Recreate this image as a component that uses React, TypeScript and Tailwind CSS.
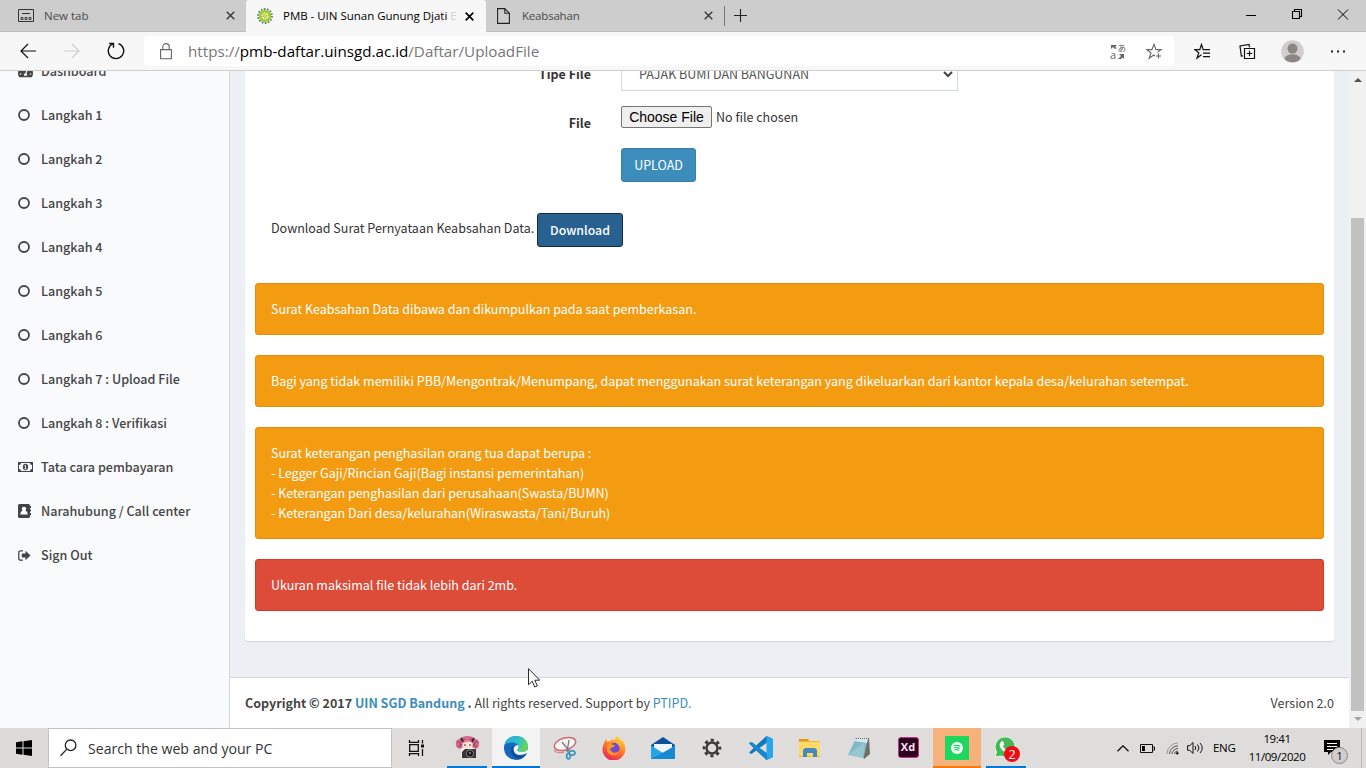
import React from "react";
import { FaTachometerAlt } from "react-icons/fa";

const UI = "font-['Open_Sans','Noto_Sans',sans-serif]";
const BODY = "font-['Noto_Sans_CJK_SC','Noto_Sans',sans-serif]";

function Close({ dark }: { dark?: boolean }) {
  return (
    <svg width="9" height="9" viewBox="0 0 9 9" className="shrink-0">
      <path d="M.7.7 8.3 8.3M8.3.7.7 8.3" stroke={dark ? "#000" : "#333"} strokeWidth={dark ? 1.7 : 1.3} />
    </svg>
  );
}

function TabStrip() {
  return (
    <div className={`flex h-8 items-stretch bg-[#cdcdcd] ${UI} text-[11.5px] text-[#4a4a4a]`}>
      <div className="flex w-[246px] items-center border-b border-[#bdbdbd] pl-[18px] pr-[11px]">
        <svg width="16" height="13" viewBox="0 0 16 13" fill="none" stroke="#333">
          <path d="M.5.5h15v12H.5zM4 4.5h8" />
          <path d="M3 8.5h2v2H3zM7 8.5h2v2H7zM11 8.5h2v2h-2z" strokeWidth=".9" />
        </svg>
        <span className="ml-[10px] flex-1">New tab</span>
        <Close />
      </div>
      <div className="flex w-[240px] items-center rounded-t-[3px] bg-[#f7f7f7] pl-[11px] pr-[12px] text-black">
        <svg width="16" height="16" viewBox="0 0 16 16" className="shrink-0">
          <circle cx="8" cy="8" r="7" fill="none" stroke="#4d7f70" strokeWidth="1.8" strokeDasharray="1.7 1.45" />
          <circle cx="8" cy="8" r="6.2" fill="#a5c935" />
          <circle cx="8" cy="8" r="2.7" fill="none" stroke="#fbfbdc" strokeWidth="1.7" strokeDasharray="1.8 .9" />
          <circle cx="8" cy="8" r="1" fill="#e2df67" />
        </svg>
        <span className="ml-[10px] whitespace-nowrap tracking-[-0.02px]">
          PMB - UIN Sunan Gunung Djati <span className="text-[#cfcfcf]">E</span>
        </span>
        <span className="flex-1" />
        <Close dark />
      </div>
      <div className="flex w-[239px] items-center border-b border-[#bdbdbd] pl-[11px] pr-[12px]">
        <svg width="13" height="16" viewBox="0 0 13 16" fill="none" stroke="#222" strokeWidth="1.1">
          <path d="M.6.6h7.2l4.6 4.6v10.2H.6zM7.8.6v4.6h4.6" />
        </svg>
        <span className="ml-3 flex-1 tracking-[-0.2px]">Keabsahan</span>
        <Close />
      </div>
      <div className="flex flex-1 items-center border-b border-[#bdbdbd]">
        <div className="-ml-px h-5 w-px bg-[#777]" />
        <svg width="13" height="13" viewBox="0 0 13 13" className="ml-[9px]">
          <path d="M6.5 0v13M0 6.5h13" stroke="#222" strokeWidth="1.1" />
        </svg>
        <div className="flex-1" />
        <svg width="103" height="12" viewBox="0 0 103 12" className="mr-[17px] -mt-[3px]" fill="none" stroke="#000">
          <path d="M0 7.5h10M46.5 3.5h7v7h-7zM48.5 3.5v-2h7v7h-2" strokeWidth="1.1" />
          <path d="M92 1.5l10 10M102 1.5l-10 10" />
        </svg>
      </div>
    </div>
  );
}

function Toolbar() {
  return (
    <div className="flex h-[39px] items-center border-b border-[#cfcfcf] bg-[#f7f7f7]">
      <svg width="18" height="16" viewBox="0 0 18 16" className="ml-5" fill="none" stroke="#111" strokeWidth="1.2">
        <path d="M16 8H1M8 1 1 8l7 7" />
      </svg>
      <svg width="18" height="16" viewBox="0 0 18 16" className="ml-[26px]" fill="none" stroke="#cfcfcf" strokeWidth="1.2">
        <path d="M0 8h15M8 1l7 7-7 7" />
      </svg>
      <svg width="18" height="18" viewBox="0 0 18 18" className="ml-[25px]" fill="none" stroke="#111" strokeWidth="1.4">
        <path d="M6.2 1.7A7.7 7.7 0 1 0 11.5 1.6M2.2 1.5h4.3v4.3" />
      </svg>
      <div className="ml-[19px] flex h-[30px] w-[1030px] items-center rounded-[3px] bg-white">
        <svg width="12" height="17" viewBox="0 0 12 17" className="ml-4" fill="none" stroke="#666" strokeWidth="1.1">
          <path d="M.6 6.6h10.8v9.2H.6zM2.800 6.600V3.800a3.200 3.200 0 0 1 6.400 0v2.800" />
        </svg>
        <span className={`ml-4 flex-1 ${UI} text-[15.2px] text-[#777] whitespace-nowrap`}>
          https://<span className="text-black">pmb-daftar.uinsgd.ac.id</span>/Daftar/UploadFile
        </span>
        <svg width="16" height="17" viewBox="0 0 16 17" className="mr-[20px] overflow-visible" fill="#666">
          <path d="M1 2h6L5 4l2 1-2 1-2-2-2 2zM9 11h5v5l-1.4-1.4L11 16H8l3-3z" />
          <text x="7.4" y="7.8" fontSize="8.5" fontFamily="Noto Sans CJK JP">あ</text>
          <text x="0" y="16" fontSize="11" fontFamily="Open Sans">a</text>
        </svg>
        <svg width="17" height="17" viewBox="0 0 17 17" className="mr-[11px]" fill="none" stroke="#666" strokeWidth="1.1">
          <path d="M9 13l-1.2-1-4.6 3.3L5 10 .8 6.6h5.1L8 1.2l2 5.4h5.1l-3.6 2.8M12.5 10.5v5M10 13h5" />
        </svg>
      </div>
      <svg width="17" height="17" viewBox="0 0 17 17" className="ml-[20px]" fill="none" stroke="#111" strokeWidth="1.2">
        <path d="M7.4 11.7 3 15l1.8-5.2L.8 6.6h5L7.5 1.4l1.7 5.2H16M9 10.2h7M9 13.6h7" />
      </svg>
      <svg width="17" height="17" viewBox="0 0 17 17" className="ml-[28px]" fill="none" stroke="#111" strokeWidth="1.2">
        <path d="M5.5 5.5h10v10h-10zM10.5 7.7v5.6M7.7 10.5h5.6M4 12.8l-1.7.2L1 3l9-1.6.5 3" />
      </svg>
      <svg width="23" height="23" viewBox="0 0 23 23" className="ml-[25px]">
        <circle cx="11.5" cy="11.5" r="11.3" fill="#d0cecc" />
        <circle cx="11.5" cy="8.6" r="5" fill="#8a8785" />
        <path d="M3.5 19c1.2-6.2 14.8-6.2 16 0a11.3 11.3 0 0 1-16 0z" fill="#8a8785" />
      </svg>
      <svg width="16" height="3" viewBox="0 0 16 3" className="ml-[26px]" fill="#222">
        <path d="M1 .5h2v2H1zM7 .5h2v2H7zM13 .5h2v2h-2z" />
      </svg>
    </div>
  );
}

const Ring = () => (
  <svg width="12" height="12" viewBox="0 0 12 12">
    <circle cx="6" cy="6" r="5" fill="none" stroke="#444" strokeWidth="1.8" />
  </svg>
);
const Money = () => (
  <svg width="15" height="10" viewBox="0 0 15 10">
    <path fillRule="evenodd" fill="#444" d="M0 0h15v10H0zM3 1a2 2 0 0 1-2 2v4a2 2 0 0 1 2 2h9a2 2 0 0 1 2-2V3a2 2 0 0 1-2-2z" />
    <ellipse cx="7.5" cy="5" rx="2.6" ry="3.2" fill="#444" />
    <path d="M6.5 3.8l1-.7v3.7M6.3 6.8h2.4" stroke="#fff" strokeWidth=".8" fill="none" />
  </svg>
);
const Book = () => (
  <svg width="13" height="14" viewBox="0 0 13 14">
    <path fill="#444" d="M1.5 0h9A1.5 1.5 0 0 1 12 1.5V2h1v2h-1v1.500h1v2h-1V9h1v2h-1v1.500A1.500 1.500 0 0 1 10.500 14h-9A1.500 1.500 0 0 1 0 12.500v-11A1.500 1.500 0 0 1 1.500 0z" />
    <circle cx="6" cy="5" r="2.2" fill="#fff" />
    <path d="M2.300 10.500c0-2 1-3.500 2-3.500h3.400c1 0 2 1.500 2 3.500z" fill="#fff" />
  </svg>
);
const Exit = () => (
  <svg width="13" height="11" viewBox="0 0 13 11">
    <path d="M5 .8H2.500A1.700 1.700 0 0 0 .8 2.500v6a1.700 1.700 0 0 0 1.700 1.700H5" fill="none" stroke="#444" strokeWidth="1.300" />
    <path d="M3.800 3.500h3.700V.8L12.500 5.500 7.500 10.200V7.500H3.800z" fill="#444" />
  </svg>
);

const menu: [string, React.ReactNode][] = [
  ["Dashboard", <FaTachometerAlt size={15} />],
  ["Langkah 1", <Ring />],
  ["Langkah 2", <Ring />],
  ["Langkah 3", <Ring />],
  ["Langkah 4", <Ring />],
  ["Langkah 5", <Ring />],
  ["Langkah 6", <Ring />],
  ["Langkah 7 : Upload File", <Ring />],
  ["Langkah 8 : Verifikasi", <Ring />],
  ["Tata cara pembayaran", <Money />],
  ["Narahubung / Call center", <Book />],
  ["Sign Out", <Exit />],
];

function Sidebar() {
  return (
    <nav className="w-[230px] shrink-0 border-r border-[#d2d6de] bg-[#f9fafc]">
      <ul className="-mt-[22px]">
        {menu.map(([label, icon]) => (
          <li key={label} className="flex h-11 items-center pl-[18px] text-[12.58px] font-medium text-[#444] whitespace-nowrap">
            <span className="w-[23px]">{icon}</span>
            {label}
          </li>
        ))}
      </ul>
    </nav>
  );
}

function Alert({ children, danger }: { children: React.ReactNode; danger?: boolean }) {
  return (
    <div
      className={`mb-5 rounded-[3px] border p-[15px] text-white ${
        danger ? "border-[#d73925] bg-[#dd4b39]" : "border-[#e08e0b] bg-[#f39c12]"
      }`}
    >
      {children}
    </div>
  );
}

function Content() {
  return (
    <main className="flex flex-1 flex-col bg-[#ecf0f5]">
      <section className="mx-[15px] h-[570px] rounded-b-[3px] bg-white px-[10px] shadow-[0_1px_1px_rgba(0,0,0,0.12)]">
        <div className="-mt-[14px] flex h-[34px]">
          <div className="w-[336px] pt-[7px] text-right font-bold text-[#333]">Tipe File</div>
          <div className="ml-[30px] flex w-[337px] items-center justify-between border border-[#d2d6de] pl-[17px] pr-[4px] text-[#555]">
            PAJAK BUMI DAN BANGUNAN
            <svg width="10" height="7" viewBox="0 0 10 7" fill="none" stroke="#444" strokeWidth="2">
              <path d="M1 1l4 4 4-4" />
            </svg>
          </div>
        </div>
        <div className="mt-[15px] flex h-[22px] items-center">
          <div className="w-[336px] translate-y-[6px] text-right font-bold text-[#333]">File</div>
          <button className="ml-[30px] h-[22px] w-[91px] rounded-[2px] border border-[#767676] bg-[#efefef] font-['Liberation_Sans',sans-serif] text-[14px] leading-5 text-black">
            Choose File
          </button>
          <span className="ml-1">No file chosen</span>
        </div>
        <button className="ml-[366px] mt-5 block h-[34px] w-[75px] rounded-[3px] border border-[#367fa9] bg-[#3c8dbc] text-white">
          UPLOAD
        </button>
        <div className="ml-4 mt-[31px] flex h-[34px] whitespace-nowrap">
          <span className="w-[266px] pt-[5px]">Download Surat Pernyataan Keabsahan Data.</span>
          <button className="w-[86px] rounded-[3px] border border-[#122b40] bg-[#286090] text-[12.3px] font-medium text-white">Download</button>
        </div>
        <div className="mt-9">
          <Alert>Surat Keabsahan Data dibawa dan dikumpulkan pada saat pemberkasan.</Alert>
          <Alert>
            Bagi yang tidak memiliki PBB/Mengontrak/Menumpang, dapat menggunakan surat keterangan yang dikeluarkan dari kantor kepala desa/kelurahan setempat.
          </Alert>
          <Alert>
            Surat keterangan penghasilan orang tua dapat berupa :<br />- Legger Gaji/Rincian Gaji(Bagi instansi pemerintahan)
            <br />- Keterangan penghasilan dari perusahaan(Swasta/BUMN)
            <br />- Keterangan Dari desa/kelurahan(Wiraswasta/Tani/Buruh)
          </Alert>
          <Alert danger>Ukuran maksimal file tidak lebih dari 2mb.</Alert>
        </div>
      </section>
      <footer className="mt-auto flex h-[51px] items-center justify-between border-t border-[#d2d6de] bg-white px-[15px] text-[#444]">
        <div>
          <b>
            Copyright © 2017 <span className="text-[#3c8dbc]">UIN SGD Bandung</span> .
          </b>{" "}
          All rights reserved. Support by <span className="text-[#3c8dbc]">PTIPD.</span>
        </div>
        <span>Version 2.0</span>
      </footer>
    </main>
  );
}

function ScrollBar() {
  return (
    <div className="flex w-[17px] flex-col items-center bg-[#f1f1f1]">
      <svg width="8" height="4" viewBox="0 0 8 4" className="mt-[7px]">
        <path d="M0 4 4 0l4 4z" fill="#505050" />
      </svg>
      <div className="mt-[136px] h-[493px] w-[13px] bg-[#c1c1c1]" />
      <svg width="8" height="4" viewBox="0 0 8 4" className="mt-[6px]">
        <path d="M0 0h8L4 4z" fill="#a3a3a3" />
      </svg>
    </div>
  );
}

function Slot({ children, className = "" }: { children: React.ReactNode; className?: string }) {
  return <div className={`mr-px flex h-10 w-12 shrink-0 items-center justify-center ${className}`}>{children}</div>;
}

function Taskbar() {
  return (
    <div className={`flex h-10 items-stretch bg-linear-to-r from-[#dcdbda] via-[#dfdedc] to-[#dedcda] ${UI} text-black`}>
      <div className="flex w-12 items-center justify-center">
        <svg width="16" height="16" viewBox="0 0 16 16">
          <path d="M0 2.300 6.500 1.300v6.200H0zM7.500 1.200 16 0v7.500H7.500zM0 8.500h6.500v6.200L0 13.700zM7.500 8.500H16V16l-8.500-1.200z" />
        </svg>
      </div>
      <div className="flex w-[344px] items-center border border-[#c3c3c3] bg-white pl-[11px] text-[#333]">
        <svg width="17" height="18" viewBox="0 0 17 18" fill="none" stroke="#222" strokeWidth="1.300">
          <circle cx="10.600" cy="6.300" r="5.300" />
          <path d="M6.800 10.100.6 16.800" />
        </svg>
        <span className="ml-[11px] mt-px text-[14.1px] whitespace-nowrap">Search the web and your PC</span>
      </div>
      <Slot className="mr-[3px]">
        <svg width="17" height="16" viewBox="0 0 17 16" fill="none" stroke="#111" strokeWidth="1.300">
          <path d="M1.700 4.700h8.600v6.600H1.700zM1.500 0v2.300h9V0M1.500 16v-2.300h9V16M14.500 0v3.500M14.500 9v7" />
          <path d="M13 4.500h3v3h-3z" fill="#111" stroke="none" />
        </svg>
      </Slot>
      <Slot className="relative ml-[2px]">
        <svg width="25" height="24" viewBox="0 0 25 24" className="mb-px">
          <path d="M5 3c3-4 12-4 15 0 3 0 5 3 4 6 0 4-5 5-7 3H8c-3 2-8 0-7-4C0 5 3 3 5 3z" fill="#d7688a" />
          <path d="M2 7c2-3 3-1 4 3M23 7c-2-3-4-1-4 3M8 3l4 2 5-2M3 10c2 1 3 0 3-2M22 10c-2 1-3 0-3-2" stroke="#953c5c" fill="none" />
          <path d="M7.500 7c2-2 8-2 10 0v6h-10z" fill="#f8e2d7" />
          <path d="M7 7c1-3 3-3 5-3s5 0 6 3c-2-1-3-1.500-4-2-2 2-5 1-7 2z" fill="#e67f9d" />
          <path d="M6 2l2 4M19 2l-2 4" stroke="#402733" strokeWidth="2" />
          <path d="M9 9h2M14 9h2" stroke="#622" />
          <path d="M6 12h14v10H6z" fill="#efecea" />
          <path d="M10 13h11v9H7v-6z" fill="#373536" />
          <circle cx="15" cy="17.500" r="3.600" fill="#161616" stroke="#88817d" />
          <circle cx="15" cy="17" r="1.200" fill="#697785" />
        </svg>
        <div className="absolute bottom-0 left-[4px] h-[2px] w-10 bg-[#0078d7]" />
      </Slot>
      <Slot className="border-b-2 border-[#0078d7] bg-[#f3f3f3] pt-[2px]">
        <svg width="24" height="24" viewBox="0 0 24 24">
          <defs>
            <linearGradient id="eg" x1="0" y1=".2" x2="1" y2=".5">
              <stop offset="0" stopColor="#26a8e8" />
              <stop offset=".55" stopColor="#2fc0c9" />
              <stop offset="1" stopColor="#65d951" />
            </linearGradient>
          </defs>
          <circle cx="12" cy="12" r="12" fill="#1668bd" />
          <path d="M.3 10C2 2 8 0 12 0c7 0 12 5 12 10 0 4-3 6-6.500 6-2.500 0-4-1-4-2 0-.8 1-1 1-3 0-2.500-3-4.500-6.500-4.500S1.500 7.500.3 10z" fill="url(#eg)" />
          <path d="M8.500 9.500C5 14 7.500 21.500 15 23.300c3-.6 6-2.700 7.500-5.500-6 3.200-12.500 1-13-4-.1-1.600.3-3-1-4.300z" fill="#0d4f9d" />
          <path d="M14.400 9.500c-2.600-.8-5 1.400-4.700 4.400.5 4.500 6.300 6.800 12.600 3.400L24.500 16l-.7-3c-2 3-4.800 3-6.300 3-3 0-4.600-1.200-4.200-2.200.7-1.200 1.500-2 1.100-4.300z" fill="#f3f3f3" />
        </svg>
      </Slot>
      <Slot>
        <svg width="24" height="24" viewBox="0 0 24 24" fill="none">
          <ellipse cx="12" cy="8" rx="11" ry="6" transform="rotate(-17 12 8)" fill="#f7f4f4" stroke="#cf6b70" strokeWidth="1.500" />
          <path d="M1 14c2 3 6 3 10 2" stroke="#cf8b8b" strokeWidth="1.300" />
          <path d="M9 6l8 10M16 4l-2 12" stroke="#777" strokeWidth="1.300" />
          <ellipse cx="19" cy="17" rx="3" ry="2.200" stroke="#3a93c5" strokeWidth="1.700" />
          <ellipse cx="15.500" cy="20" rx="1.800" ry="2.800" stroke="#3a93c5" strokeWidth="1.700" />
        </svg>
      </Slot>
      <Slot>
        <svg width="24" height="24" viewBox="0 0 24 24">
          <defs>
            <linearGradient id="ff" x1=".8" y1="0" x2=".3" y2="1">
              <stop offset="0" stopColor="#ffe337" />
              <stop offset=".5" stopColor="#ff7b24" />
              <stop offset="1" stopColor="#e9205c" />
            </linearGradient>
          </defs>
          <path d="M2.500 6 4 3l1 2.500L8 5c1-.6 2-1.700 3-1.800L13 4l1-4c3 1 4 3 5 5l1-1c3 4 4 8 3 12a11.500 11.500 0 0 1-22 1C-.2 13 1 9 2.500 6z" fill="url(#ff)" />
          <circle cx="12.500" cy="12" r="5.300" fill="#7748cf" />
          <path d="M5 9c3-3 5 0 8 0-1 3-4 2-5 4 1 4 6 5 9 2-2 7-11 5-12-1z" fill="#ff9624" />
          <path d="M13 2c0 4 5 5 5 10-1-4-4-4-5-10z" fill="#ffe15a" />
        </svg>
      </Slot>
      <Slot>
        <svg width="24" height="22" viewBox="0 0 24 22">
          <path d="M0 8 12 0l12 8v14H0z" fill="#0d519b" />
          <path d="M3 7h18v9H3z" fill="#edf5fa" />
          <path d="M0 8.500 12 16l12-7.500V22H0z" fill="#27a4e7" />
          <path d="M0 22 15 14l9-5v13z" fill="#1589d4" />
        </svg>
      </Slot>
      <Slot>
        <svg width="20" height="20" viewBox="0 0 20 20" fill="none" stroke="#3a3a3a">
          <circle cx="10" cy="10" r="5.500" strokeWidth="2.400" />
          <circle cx="10" cy="10" r="7.900" strokeWidth="2.800" strokeDasharray="3.100 3.105" strokeDashoffset="1.550" />
        </svg>
      </Slot>
      <Slot>
        <svg width="24" height="24" viewBox="0 0 24 24">
          <path d="M17.500 0 7.200 9.600 2.500 6 0 7.300 4.600 12 0 16.700 2.500 18l4.700-3.600L17.500 24 24 21V3zM18 6.500v11L10.500 12z" fill="#1378bb" fillRule="evenodd" />
          <path d="M17.500 0 24 3v18l-6.500 3z" fill="#29a5ec" />
          <path d="M2.500 6 18 17.500V24L0 7.300z" fill="#1788cf" />
        </svg>
      </Slot>
      <Slot>
        <svg width="22" height="20" viewBox="0 0 22 20">
          <path d="M0 1h9l2 2h10v16H0z" fill="#efb72b" />
          <path d="M0 4h21v14H0z" fill="#ffd968" />
          <path d="M0 1h9v2H0z" fill="#d99b16" />
          <path d="M4 19v-7l2-2h10l2 2v7h-4v-4H8v4z" fill="#438ac1" />
        </svg>
      </Slot>
      <Slot>
        <svg width="24" height="22" viewBox="0 0 24 22">
          <path d="M8 1h14l1 16-6 5z" fill="#736e64" />
          <path d="M9 1h12l-4.500 20L1 18z" fill="#82bac8" />
          <path d="M9 1h12l-1 5L7 4z" fill="#d8e8eb" />
          <path d="M1 18 18 5l-2 16z" fill="#a6ced6" opacity=".6" />
          <path d="M9 1.500h12" stroke="#666" strokeDasharray="1 1" />
        </svg>
      </Slot>
      <Slot>
        <div className="mb-[2px] flex h-[21px] w-[21px] items-center justify-center rounded-[3px] border border-[#b6378b] bg-[#2e001e] text-[11px] font-bold text-[#ffe3f6]">
          Xd
        </div>
      </Slot>
      <Slot className="border-b-2 border-[#f77b0c] bg-[#f7b27b] pt-[2px]">
        <svg width="24" height="24" viewBox="0 0 24 24">
          <path d="M0 0h24v24H0z" fill="#1ed760" />
          <circle cx="12" cy="12" r="6" fill="#fff" />
          <path d="M8.500 9.800c2.500-.8 5-.5 7 .6M8.800 12c2.200-.6 4.300-.4 6.100.5M9.200 14c1.800-.5 3.500-.3 5 .5" stroke="#1ed760" strokeWidth="1.200" fill="none" />
        </svg>
      </Slot>
      <Slot className="relative">
        <svg width="24" height="24" viewBox="0 0 24 24" className="mb-px">
          <path d="M1 21 2.500 16A10 10 0 1 1 7 20z" fill="#42b954" stroke="#e9fbe9" />
          <path d="M7 5.500l2-.5 1.300 3.500L9 10c1 2 2 3 4 4l1.500-1.500 3 1.500c0 3-3 4-6 2.500C8 15 6 12 5.500 9z" fill="#fff" />
        </svg>
        <svg width="16" height="16" viewBox="0 0 16 16" className="absolute left-[22px] top-[18px]">
          <circle cx="8" cy="8" r="8" fill="#f00b12" />
          <text x="8" y="12.500" textAnchor="middle" fontSize="12.500" fill="#fff" fontFamily="Open Sans">2</text>
        </svg>
        <div className="absolute bottom-0 left-[4px] h-[2px] w-10 bg-[#0078d7]" />
      </Slot>
      <div className="flex flex-1 items-center">
        <svg width="12" height="7" viewBox="0 0 12 7" className="ml-[86px]" fill="none" stroke="#111" strokeWidth="1.300">
          <path d="M.5 6.300 6 .8l5.500 5.500" />
        </svg>
        <svg width="15" height="9" viewBox="0 0 15 9" className="ml-[11px]">
          <path d="M.5.5h12v8H.5zM13 3h1.500v3H13" fill="none" stroke="#111" />
          <path d="M2 2h3v5H2z" />
        </svg>
        <svg width="13" height="13" viewBox="0 0 13 13" className="ml-[11px]" fill="none" stroke="#555">
          <path d="M1 12A11 11 0 0 1 12 1" stroke="#999" />
          <path d="M3.500 12A8.500 8.500 0 0 1 12 3.800M6 12a6 6 0 0 1 6-5.500M8.500 12A3.500 3.500 0 0 1 12 9" />
          <circle cx="11.300" cy="11.300" r="1.200" fill="#111" stroke="none" />
        </svg>
        <svg width="17" height="14" viewBox="0 0 17 14" className="ml-[8px]" fill="none" stroke="#111">
          <path d="M.6 4.700h2.200L6 1.500v11L2.800 9.300H.6zM8 5q1.500 2 0 4M10.500 3.500q3 3.500 0 7M13 2q4.500 5 0 10" />
        </svg>
        <span className="ml-[9px] w-[23px] text-[11.500px] tracking-[-0.300px]">ENG</span>
        <div className="ml-[11px] w-[60px] text-center text-[11.500px] leading-[18px] tracking-[-0.450px] whitespace-nowrap">
          19:41
          <br />
          11/09/2020
        </div>
        <svg width="26" height="28" viewBox="0 0 26 28" className="ml-[17px] mt-[6px] shrink-0">
          <path d="M0 3h16v12h-9l-3 3v-3H0z" />
          <path d="M3 6.500h10M3 9.500h10M3 12.500h6" stroke="#fff" />
          <circle cx="15.500" cy="18.500" r="8" fill="#cecece" stroke="#888" />
          <text x="15.500" y="22.700" textAnchor="middle" fontSize="11.500" fontFamily="Open Sans" fill="#111">1</text>
        </svg>
        <div className="ml-[11px] h-full w-px bg-[#b9b9b9]" />
      </div>
    </div>
  );
}

export default function App() {
  return (
    <div className="relative flex h-[768px] w-[1366px] flex-col overflow-hidden bg-white">
      <TabStrip />
      <Toolbar />
      <div className={`flex h-[657px] overflow-hidden ${BODY} text-[12.530px] leading-5 text-[#333]`}>
        <Sidebar />
        <Content />
        <ScrollBar />
      </div>
      <Taskbar />
      <svg width="12" height="20" viewBox="0 0 12 20" className="absolute left-[528px] top-[668px]">
        <path d="M.5.700v16l3.700-3.500 2.500 5.800 2.600-1.100-2.500-5.700h5z" fill="#fff" stroke="#111" strokeWidth=".9" />
      </svg>
    </div>
  );
}
